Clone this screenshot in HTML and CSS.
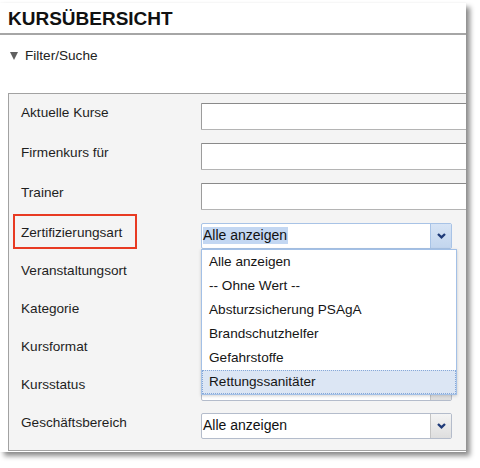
FILE: index.html
```html
<!DOCTYPE html>
<html lang="de">
<head>
<meta charset="utf-8">
<title>Kursübersicht</title>
<link rel="stylesheet" href="styles.css">
</head>
<body>
<div class="panel">
  <h1 class="title">KURSÜBERSICHT</h1>
  <div class="toggle"><span class="tri"></span>Filter/Suche</div>
  <div class="filterbox">
    <div class="row"><label class="lbl">Aktuelle Kurse</label><div class="text"></div></div>
    <div class="row"><label class="lbl">Firmenkurs für</label><div class="text"></div></div>
    <div class="row"><label class="lbl">Trainer</label><div class="text"></div></div>
    <div class="row row-sel first-sel">
      <label class="lbl hl">Zertifizierungsart</label>
      <div class="ctl">
        <div class="select focused">
          <span class="val"><span class="mark">Alle anzeigen</span></span>
          <span class="btn"><svg width="9" height="6" viewBox="0 0 9 6"><polyline points="1,1 4.5,4.4 8,1" fill="none" stroke="#1f3a78" stroke-width="2.3"/></svg></span>
        </div>
        <ul class="dropdown">
          <li>Alle anzeigen</li>
          <li>-- Ohne Wert --</li>
          <li>Absturzsicherung PSAgA</li>
          <li>Brandschutzhelfer</li>
          <li>Gefahrstoffe</li>
          <li class="active">Rettungssanitäter</li>
        </ul>
      </div>
    </div>
    <div class="row row-sel"><label class="lbl">Veranstaltungsort</label><div class="ctl"><div class="select"><span class="val"></span><span class="btn"></span></div></div></div>
    <div class="row row-sel"><label class="lbl">Kategorie</label><div class="ctl"><div class="select"><span class="val"></span><span class="btn"></span></div></div></div>
    <div class="row row-sel"><label class="lbl">Kursformat</label><div class="ctl"><div class="select"><span class="val"></span><span class="btn"></span></div></div></div>
    <div class="row row-sel"><label class="lbl">Kursstatus</label><div class="ctl"><div class="select"><span class="val"></span><span class="btn"></span></div></div></div>
    <div class="row row-sel"><label class="lbl">Geschäftsbereich</label><div class="ctl"><div class="select"><span class="val">Alle anzeigen</span><span class="btn"><svg width="9" height="6" viewBox="0 0 9 6"><polyline points="1,1 4.5,4.4 8,1" fill="none" stroke="#1f3a78" stroke-width="2.3"/></svg></span></div></div></div>
  </div>
</div>
</body>
</html>
```
FILE: styles.css
```css
* { box-sizing: border-box; }
html, body { margin: 0; padding: 0; background: #ffffff; }
body {
  font-family: "Liberation Sans", Arial, sans-serif;
  color: #1e1e1e;
  width: 480px;
  height: 468px;
  overflow: hidden;
}
.panel {
  margin-top: 3px;
  width: 466px;
  height: 449px;
  background: #ffffff;
  overflow: hidden;
  box-shadow: 4px 4px 5px rgba(0,0,0,0.45), 0 0 2px rgba(0,0,0,0.06);
  padding-top: 5px;
}
.title {
  margin: 0;
  padding: 0 0 3px 8px;
  font-size: 19px;
  line-height: 22px;
  font-weight: bold;
  color: #111;
  border-bottom: 2px solid #a6a6a6;
}
.toggle {
  margin-top: 13px;
  padding-left: 10px;
  font-size: 13.6px;
  line-height: 16px;
  height: 16px;
  display: flex;
  align-items: center;
  color: #222;
}
.tri {
  width: 0;
  height: 0;
  border-left: 4.5px solid transparent;
  border-right: 4.5px solid transparent;
  border-top: 8px solid #606060;
  margin-right: 7px;
}
.filterbox {
  margin-top: 29px;
  margin-left: 8px;
  width: 480px;
  border: 1px solid #a2a2a2;
  background: #f4f4f4;
  padding: 9px 0 11px 12px;
  display: flex;
  flex-direction: column;
  gap: 13px;
}
.row {
  display: grid;
  grid-template-columns: 180px 1fr;
  align-items: start;
}
.row-sel + .row-sel { margin-top: -1px; }
.lbl {
  font-size: 13.6px;
  line-height: 16px;
  padding-top: 2px;
  color: #1e1e1e;
  position: relative;
  justify-self: start;
}
.lbl.hl::after {
  content: "";
  position: absolute;
  left: -8px;
  top: -9px;
  width: 120px;
  height: 31px;
  border: 2px solid #e83a22;
}
.text {
  height: 27px;
  background: #fff;
  border: 1px solid #b4b4b4;
  border-top-color: #8a8a8a;
  border-left-color: #9c9c9c;
  border-radius: 1px;
}
.ctl { position: relative; width: 251px; }
.select {
  height: 26px;
  background: #fff;
  border: 1px solid #b4bccb;
  border-radius: 2px;
  display: flex;
  align-items: stretch;
}
.val {
  flex: 1;
  font-size: 14px;
  line-height: 17px;
  padding: 3px 0 0 1px;
  color: #111;
  white-space: nowrap;
}
.mark { background: #c3d7f2; display: inline-block; padding-right: 1px; }
.btn {
  width: 21px;
  border-left: 1px solid #c4c4c4;
  background: linear-gradient(#f4f4f4, #dedede);
  display: flex;
  align-items: center;
  justify-content: center;
  border-radius: 0 1px 1px 0;
}
.select.focused { border-color: #a8c3e6; }
.select.focused .btn {
  background: linear-gradient(#d7e4f5, #c2d5ee);
  border-left-color: #a8c3e6;
}
.dropdown {
  position: absolute;
  left: 0;
  top: 26px;
  width: 256px;
  margin: 0;
  padding: 0;
  list-style: none;
  background: #fff;
  border: 1px solid #a3c0e6;
  box-shadow: 0 1px 3px rgba(0,0,0,0.18);
  z-index: 5;
}
.dropdown li {
  height: 24px;
  line-height: 24px;
  padding-left: 7px;
  font-size: 13.6px;
  color: #151515;
  white-space: nowrap;
}
.dropdown li.active {
  background: #dce6f4;
  outline: 1px dotted #86a8d8;
  outline-offset: -1px;
}
```
